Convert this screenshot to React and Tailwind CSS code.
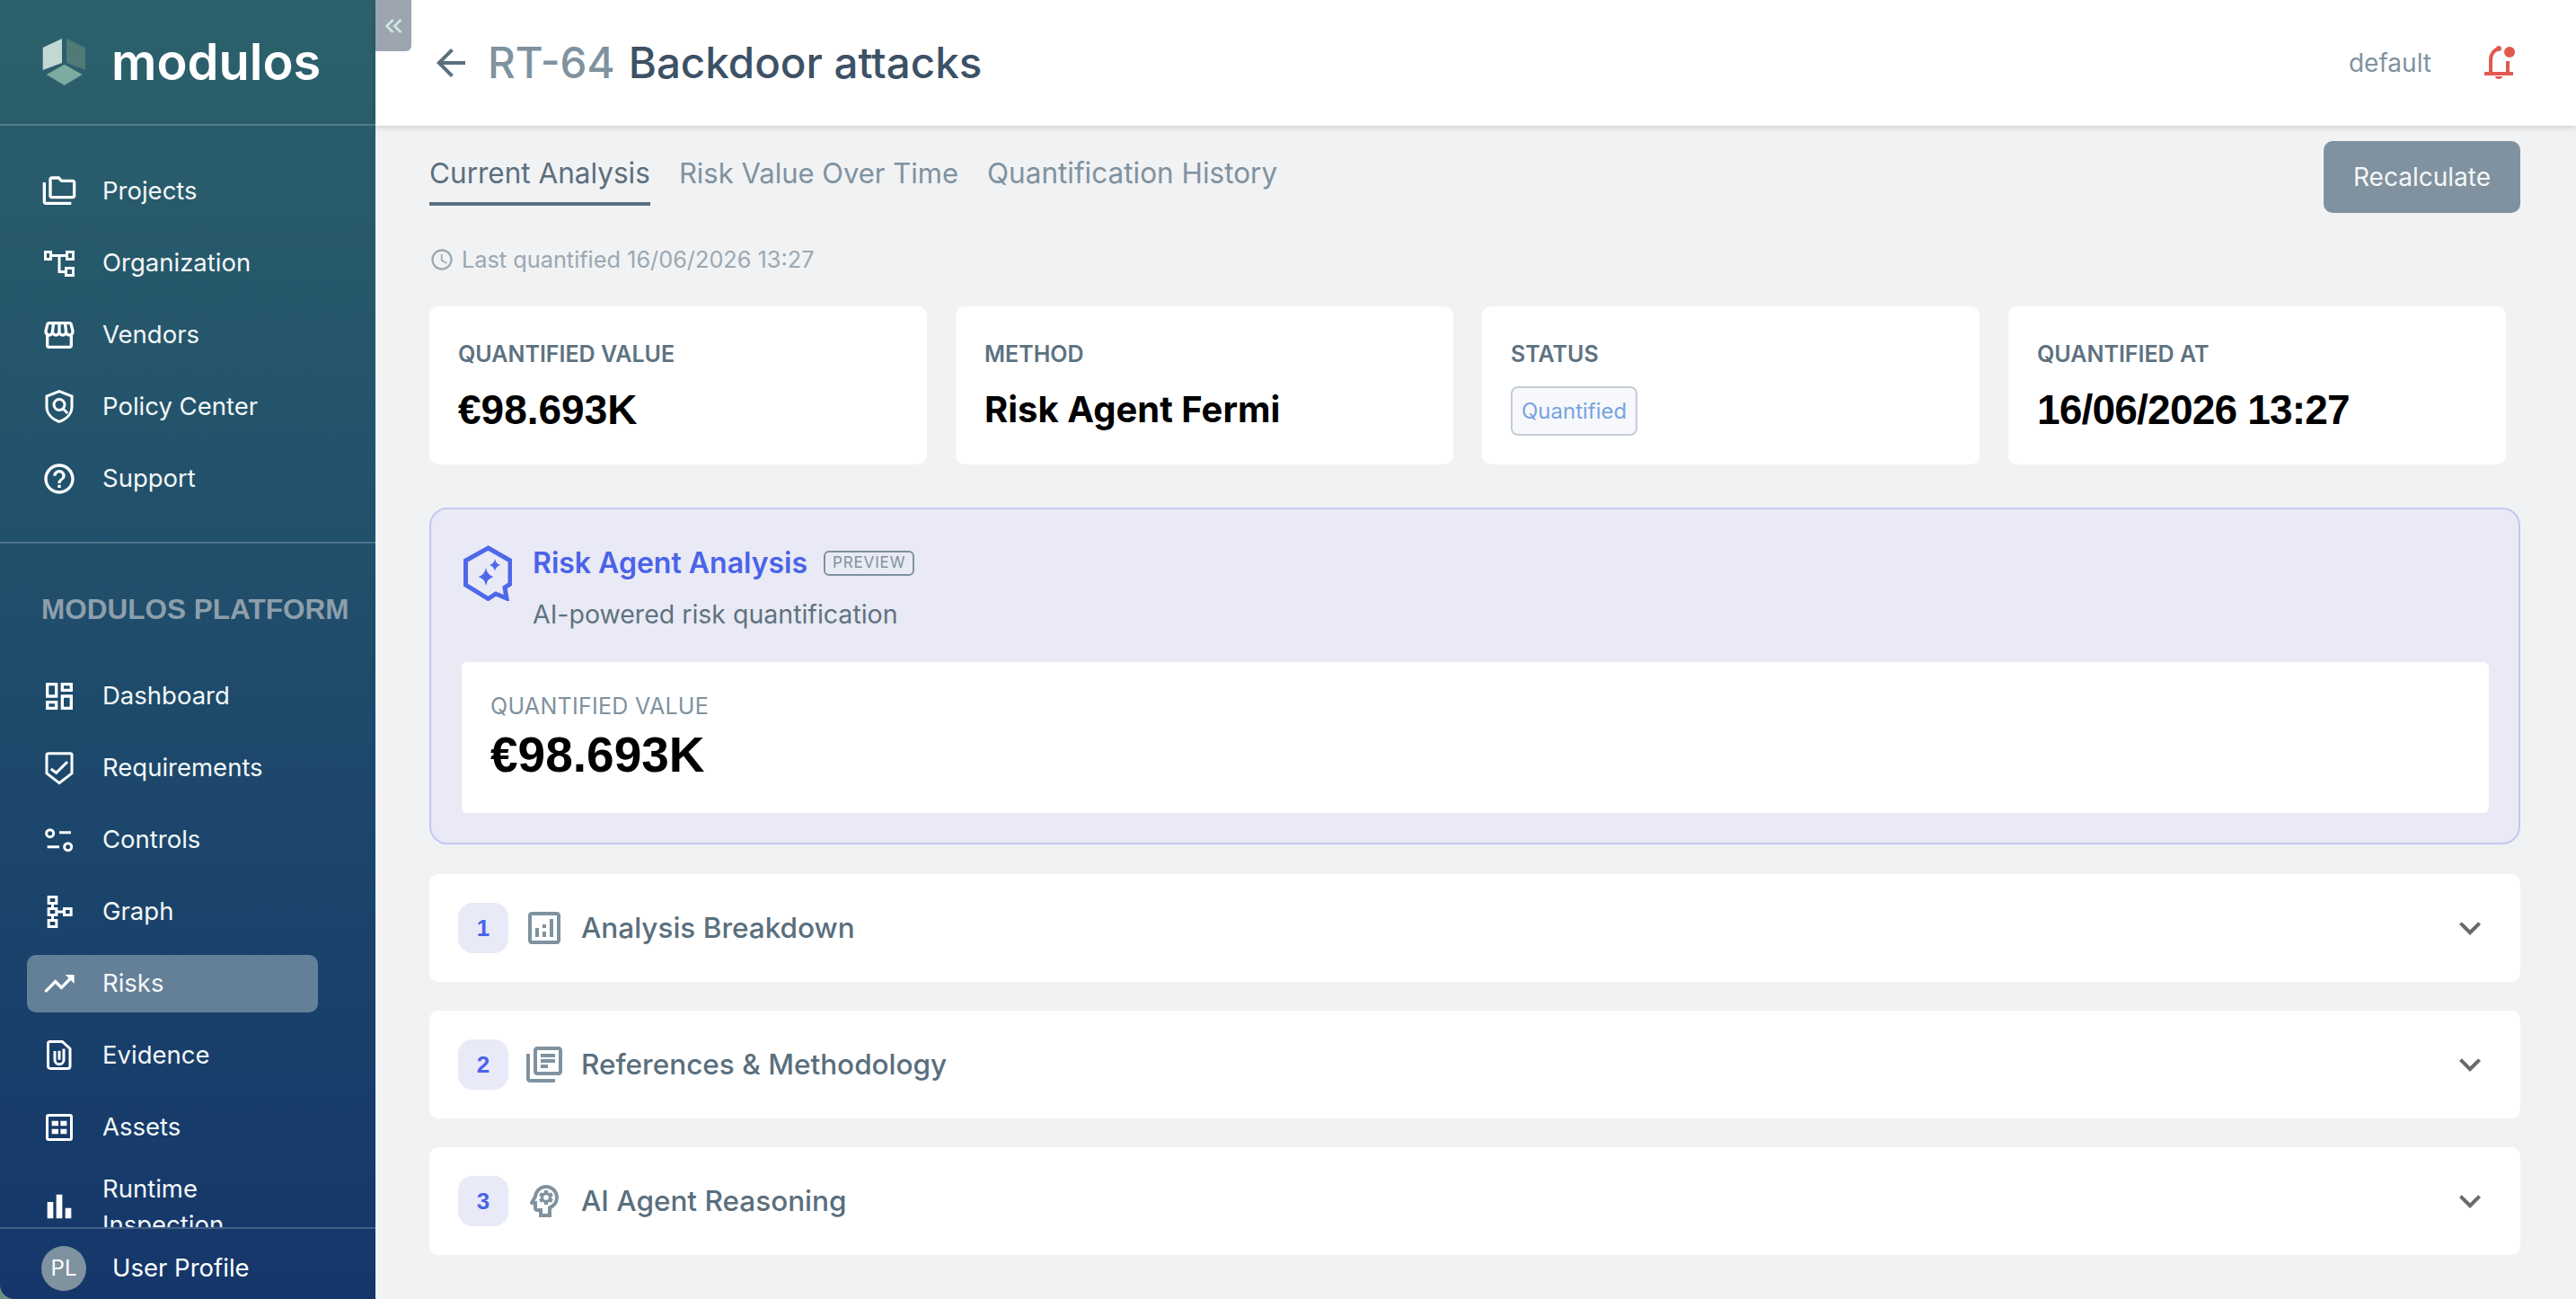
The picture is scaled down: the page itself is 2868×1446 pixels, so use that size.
import {
  MdOutlineFolderCopy,
  MdOutlineStorefront,
  MdOutlineHelpOutline,
  MdOutlineDashboard,
  MdTrendingUp,
  MdBarChart,
  MdOutlineArrowBack,
  MdExpandMore,
  MdOutlineAccessTime,
  MdKeyboardDoubleArrowLeft,
  MdOutlineLibraryBooks,
  MdOutlinePsychology,
  MdOutlineAnalytics,
} from "react-icons/md";

const sans = "font-['Inter','Noto_Sans',sans-serif]";
const helv = "font-['Liberation_Sans',Arial,sans-serif]";

const Icon = ({ children, className = "" }) => (
  <svg viewBox="0 0 24 24" fill="none" stroke="currentColor" strokeWidth="1.8" className={className}>
    {children}
  </svg>
);

const OrgIcon = (props) => (
  <Icon {...props}>
    <path d="M2.7 4.500h3.600v4.800H2.700zM17.100 4.500h4.200v4.800h-4.200zM16.500 15.300h4.800v4.800h-4.800zM6.300 6.900h10.800M12 6.900v10.800h4.500" />
  </Icon>
);
const PolicyIcon = (props) => (
  <Icon {...props}>
    <path d="M12 1.600l8.400 3.200v7c0 4.600-3.400 8.200-8.400 10-5-1.800-8.400-5.400-8.400-10v-7z" />
    <circle cx="12" cy="10.500" r="3.600" />
    <path d="M14.500 13.200l3 3" />
  </Icon>
);
const RequirementsIcon = (props) => (
  <Icon {...props}>
    <path d="M5 2.200h14.400q1 0 1 1v12.300L12 22l-8.400-6.500V3.200q0-1 1.400-1z" />
    <path d="M6.400 12.600l3.600 2.600 7.400-7.400" />
  </Icon>
);
const ControlsIcon = (props) => (
  <Icon {...props}>
    <circle cx="5.800" cy="7.600" r="2.400" />
    <circle cx="17.800" cy="16.600" r="2.400" />
    <path d="M12 7h7.800M4 16.600h8" />
  </Icon>
);
const GraphIcon = (props) => (
  <Icon {...props}>
    <path d="M4.900 2.100h5.200v4.200H4.900zM4.900 9.900h5.200v4.200H4.900zM4.900 17.700h5.200v4.200H4.900zM15.300 9.900h4.600v4.200h-4.600zM7.500 6.300v3.600M7.500 14.100v3.600M10.100 12h5.200" />
  </Icon>
);
const EvidenceIcon = (props) => (
  <Icon {...props}>
    <path d="M4.500 4q0-1.300 1.300-1.300H14l5.200 4.800V19q0 1.700-1.700 1.700H6.200q-1.700 0-1.700-1.700z" />
    <path d="M9 9v5.800a3 3 0 006 0V7.500M12 8.800v6" />
  </Icon>
);
const AssetsIcon = (props) => (
  <Icon {...props}>
    <rect x="3.900" y="3.900" width="16.200" height="16.200" rx="1" />
    <path d="M7 7.600h4.400v3.400H7zM12.800 7.600h4.200v3.400h-4.200zM7 13h4.400v3.400H7zM12.800 13h4.200v3.400h-4.200z" fill="currentColor" stroke="none" />
  </Icon>
);

const AgentIcon = ({ className }) => (
  <svg viewBox="0 0 54 62" className={className} fill="none">
    <path d="M27.500 3L52 17V43L46 47L48 59L36 54L27.500 59.500L2.500 44V17Z" stroke="#4f68ea" strokeWidth="5" />
    <path d="M25 25Q26.500 33 33.500 35Q26.500 37 25 45Q23.500 37 16.500 35Q23.500 33 25 25Z" fill="#4f68ea" />
    <path d="M35 15Q36 20.500 41 22Q36 23.500 35 29Q34 23.500 29 22Q34 20.500 35 15Z" fill="#4f68ea" />
  </svg>
);

const BellIcon = ({ className }) => (
  <svg viewBox="0 0 34 40" className={className} fill="none">
    <path d="M0 32h32" stroke="#e05a50" strokeWidth="4" />
    <path d="M7 32V17c0-7 3-11 9-13M26 18v14" stroke="#e05a50" strokeWidth="4" />
    <circle cx="16" cy="4" r="3" fill="#e05a50" />
    <circle cx="28" cy="8" r="6" fill="#e05a50" />
    <path d="M12 35h8c0 4-8 4-8 0z" fill="#e05a50" />
  </svg>
);

const Logo = () => (
  <svg viewBox="0 0 48 52" className="w-12 h-[52px] shrink-0">
    <polygon points="0.700,10 22,0 22,27 0.700,35" fill="#c2d8d2" />
    <polygon points="27,0 48,10 48,35 27,27" fill="#4f7a78" />
    <polygon points="24.700,28.700 44.700,40 24.700,52 4.700,40" fill="#7dab9f" />
  </svg>
);

const topNav = [
  ["Projects", MdOutlineFolderCopy],
  ["Organization", OrgIcon],
  ["Vendors", MdOutlineStorefront],
  ["Policy Center", PolicyIcon],
  ["Support", MdOutlineHelpOutline],
];

const platformNav = [
  ["Dashboard", MdOutlineDashboard],
  ["Requirements", RequirementsIcon],
  ["Controls", ControlsIcon],
  ["Graph", GraphIcon],
  ["Risks", MdTrendingUp],
  ["Evidence", EvidenceIcon],
  ["Assets", AssetsIcon],
];

const NavItem = ({ label, icon: NavIcon }) => (
  <div
    className={`flex items-center h-16 w-[324px] rounded-[10px] pl-[16px] ${label === "Risks" ? "bg-[#647f98]" : ""}`}
  >
    <NavIcon className="w-10 h-10 shrink-0 text-white" />
    <span className="ml-[28px] text-[27.5px] text-[#f4f7f8]">{label}</span>
  </div>
);

const Sidebar = () => (
  <aside className="relative flex flex-col w-[418px] h-[1446px] shrink-0 bg-gradient-to-b from-[#2c616b] to-[#15366a] rounded-bl-[16px] overflow-hidden">
    <div className="flex items-center h-[140px] pl-[47px] border-b-2 border-white/20 shrink-0">
      <Logo />
      <span className="ml-[29px] text-[56px] font-semibold leading-none text-white font-['Inter',sans-serif]">modulos</span>
    </div>
    <nav className="flex flex-col gap-4 pl-[30px] pt-[41px] h-[465px] shrink-0 border-b-2 border-white/20">
      {topNav.map(([label, icon]) => (
        <NavItem key={label} label={label} icon={icon} />
      ))}
    </nav>
    <div className="flex-1 overflow-hidden pl-[30px]">
      <p className={`${helv} pl-[16px] pt-[55px] pb-[47px] text-[31.5px] leading-[36px] font-bold text-[#8d9fab]`}>MODULOS PLATFORM</p>
      <div className="flex flex-col gap-4">
        {platformNav.map(([label, icon]) => (
          <NavItem key={label} label={label} icon={icon} />
        ))}
        <div className="flex items-center w-[324px] pl-[16px]">
          <MdBarChart className="w-10 h-10 shrink-0 text-white" />
          <span className="ml-[28px] text-[27.5px] leading-[40px] text-[#f4f7f8]">Runtime Inspection</span>
        </div>
      </div>
    </div>
    <div className="flex items-center h-[80px] pl-[46px] pt-[10px] border-t-2 border-white/20 shrink-0">
      <div className="flex items-center justify-center w-[50px] h-[50px] rounded-full bg-[#7f92a0] text-[24px] text-white">PL</div>
      <span className="ml-[29px] text-[27.5px] text-white">User Profile</span>
    </div>
  </aside>
);

const StatCard = ({ label, children }) => (
  <div className="h-[176px] rounded-[10px] bg-white pl-8 pt-[39px]">
    <p className="text-[25px] leading-[28px] font-semibold text-[#5d7281]">{label}</p>
    <div className="mt-[22px]">{children}</div>
  </div>
);

const sections = [
  ["1", "Analysis Breakdown", MdOutlineAnalytics],
  ["2", "References & Methodology", MdOutlineLibraryBooks],
  ["3", "AI Agent Reasoning", MdOutlinePsychology],
];

const Section = ({ num, title, icon: SectionIcon }) => (
  <div className="flex items-center h-[120px] rounded-[10px] bg-white pl-8 pr-8">
    <div className={`${helv} flex items-center justify-center w-14 h-14 rounded-2xl bg-[#e9eaf7] text-[26px] font-bold text-[#4a63e8]`}>{num}</div>
    <SectionIcon className="w-12 h-12 ml-4 text-[#7f92a0]" />
    <span className="ml-[17px] text-[31.5px] font-medium text-[#5a6f7e]">{title}</span>
    <MdExpandMore className="w-12 h-12 ml-auto text-[#6b6b6b]" />
  </div>
);

export default function App() {
  return (
    <div className={`${sans} flex w-[2868px] h-[1446px] overflow-hidden bg-[#6e8f80]`}>
      <Sidebar />
      <div className="relative flex-1 flex flex-col bg-[#f1f2f4]">
        <button className="absolute left-0 top-0 flex items-center justify-center w-10 h-[57px] rounded-br-[6px] bg-[#9ca5b0] text-[#cfe6e2]">
          <MdKeyboardDoubleArrowLeft className="w-8 h-8" />
        </button>
        <header className="flex items-center h-[140px] shrink-0 bg-white pl-[60px] pr-[68px] shadow-[0_2px_6px_rgba(0,0,0,0.14)]">
          <MdOutlineArrowBack className="w-12 h-12 text-[#5a6f7e]" />
          <h1 className="ml-[17px] text-[47.5px] font-medium text-[#3d5166]">
            <span className="text-[#7f92a0]">RT-64</span>
            <span className="ml-[15px]">Backdoor attacks</span>
          </h1>
          <span className="ml-auto text-[28px] text-[#7f92a0]">default</span>
          <BellIcon className="ml-[59px] w-[34px] h-[40px]" />
        </header>
        <main className="flex-1 pl-[60px] pr-[62px]">
          <div className="flex items-start justify-between pt-[17px]">
            <div className="flex gap-8 text-[31.5px] leading-[40px] text-[#7f92a0]">
              <div className="h-[72px] border-b-4 border-[#5a6f7e] pt-[16px] text-[#5a6f7e]">Current Analysis</div>
              <div className="pt-[16px] text-[31px]">Risk Value Over Time</div>
              <div className="pt-[16px]">Quantification History</div>
            </div>
            <button className="w-[219px] h-[80px] rounded-[10px] bg-[#80929f] text-[28px] text-[#f4f7f8]">Recalculate</button>
          </div>
          <div className="flex items-center mt-[36px] h-[32px] text-[25.3px] text-[#9aa8b2]">
            <MdOutlineAccessTime className="w-7 h-7" />
            <span className="ml-[8px]">Last quantified 16/06/2026 13:27</span>
          </div>
          <div className="grid grid-cols-4 gap-8 mt-[36px] pr-4">
            <StatCard label="QUANTIFIED VALUE">
              <p className={`${helv} text-[46px] leading-[52px] font-bold text-black`}>€98.693K</p>
            </StatCard>
            <StatCard label="METHOD">
              <p className="text-[40px] leading-[52px] font-bold text-black">Risk Agent Fermi</p>
            </StatCard>
            <StatCard label="STATUS">
              <span className="inline-flex items-center h-[55px] px-[10px] rounded-[8px] border-2 border-[#c3cdd6] bg-[#f6f8fb] text-[24px] text-[#7aa3e0]">Quantified</span>
            </StatCard>
            <StatCard label="QUANTIFIED AT">
              <p className={`${helv} text-[46px] leading-[52px] tracking-[-0.8px] font-bold text-black`}>16/06/2026 13:27</p>
            </StatCard>
          </div>
          <section className="mt-[48px] h-[375px] rounded-[20px] border-2 border-[#c3c9f2] bg-[#e9eaf5] pl-[34px] pr-[33px] pt-[40px]">
            <div className="flex items-start h-[130px]">
              <AgentIcon className="ml-[2px] w-[54px] h-[62px] shrink-0" />
              <div className="ml-[23px]">
                <div className="flex items-center h-[40px]">
                  <h2 className="text-[32px] font-semibold text-[#4a63e8]">Risk Agent Analysis</h2>
                  <span className="ml-[18px] flex items-center h-[28px] px-[8px] rounded-[6px] border-2 border-[#7f92a0] text-[17px] tracking-wider text-[#7f92a0]">PREVIEW</span>
                </div>
                <p className="mt-[20px] text-[28.5px] leading-[34px] text-[#5f7380]">AI-powered risk quantification</p>
              </div>
            </div>
            <div className="h-[168px] rounded-[6px] bg-white pl-8 pt-[35px]">
              <p className="text-[25px] leading-[28px] tracking-[0.3px] text-[#7f92a0]">QUANTIFIED VALUE</p>
              <p className={`${helv} mt-[10px] text-[55px] leading-[60px] font-bold text-black`}>€98.693K</p>
            </div>
          </section>
          <div className="flex flex-col gap-8 mt-[33px]">
            {sections.map(([num, title, icon]) => (
              <Section key={num} num={num} title={title} icon={icon} />
            ))}
          </div>
        </main>
      </div>
    </div>
  );
}
